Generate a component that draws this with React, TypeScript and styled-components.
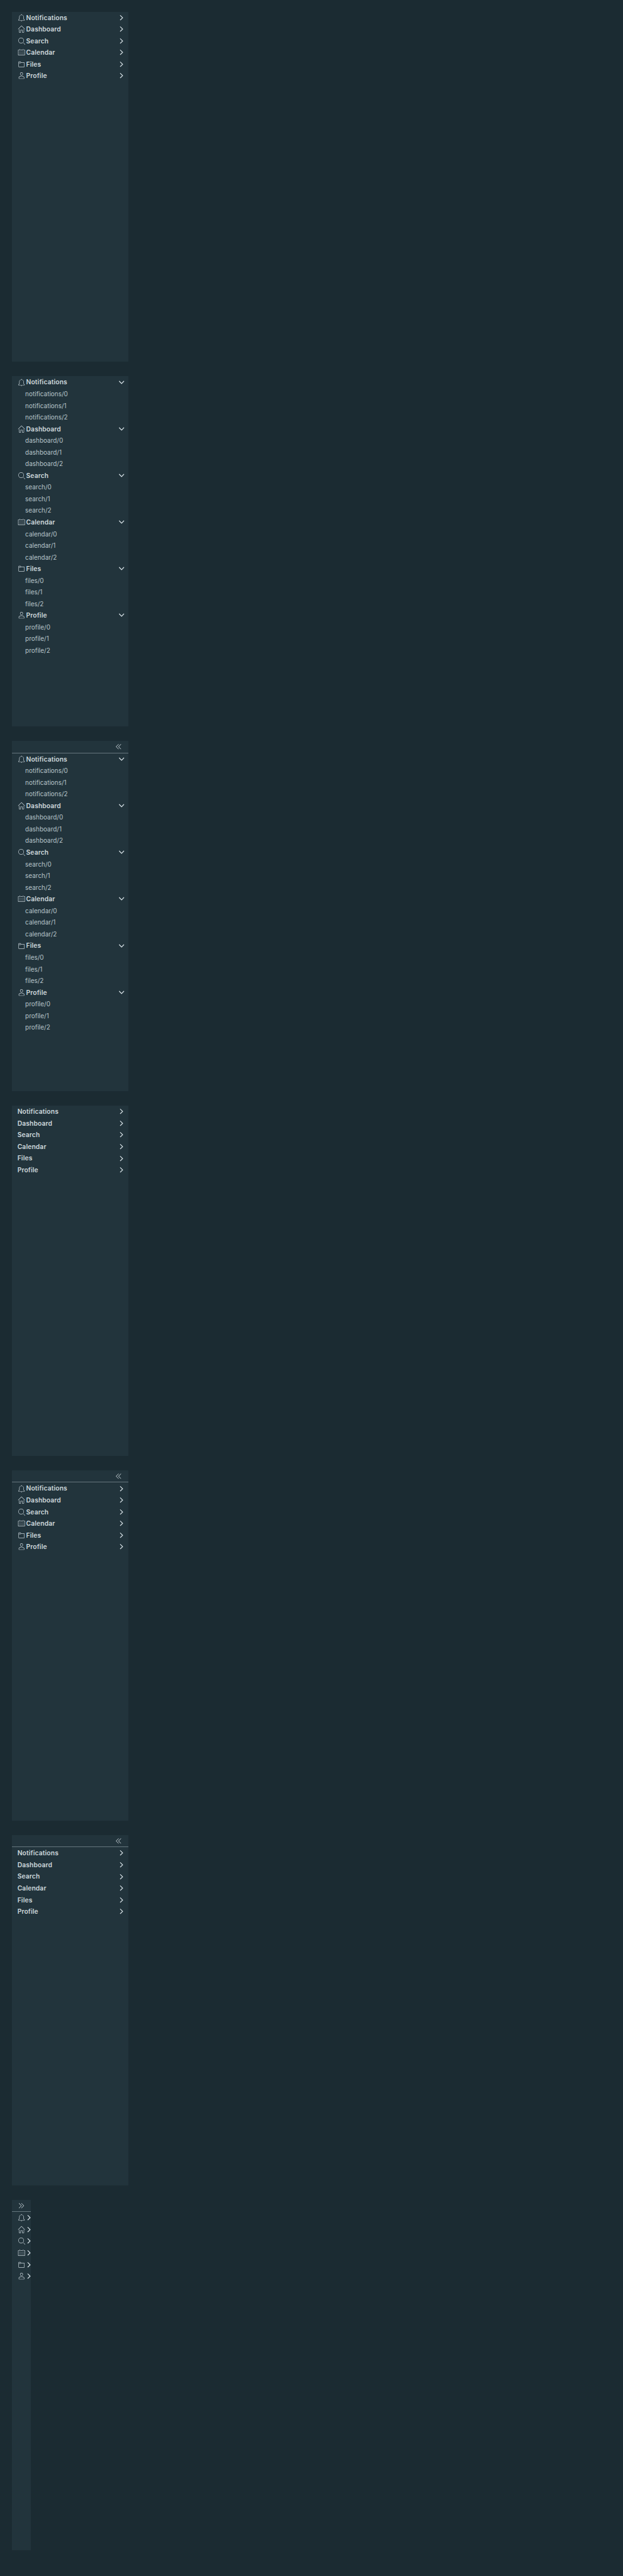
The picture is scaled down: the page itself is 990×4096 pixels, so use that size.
import React from "react";
import styled, { createGlobalStyle } from "styled-components";

const SCALE = 0.7732;
const u = (n: number) => `${+(n * SCALE).toFixed(3)}px`;

const GlobalStyle = createGlobalStyle`
  html, body { margin: 0; background: #1b2b32; }
  body { font-family: Inter, "Open Sans", sans-serif; }
`;

const Page = styled.main`
  box-sizing: border-box;
  height: 4096px;
  padding: ${u(24)};
  display: flex;
  flex-direction: column;
  gap: ${u(30)};
  overflow: hidden;
`;

const Panel = styled.nav<{ $collapsed?: boolean }>`
  flex: none;
  width: ${(p) => u(p.$collapsed ? 40 : 240)};
  height: ${u(720)};
  background: #22343c;
  overflow: hidden;
`;

const PanelHeader = styled.div<{ $collapsed?: boolean }>`
  box-sizing: border-box;
  display: flex;
  align-items: center;
  justify-content: ${(p) => (p.$collapsed ? "flex-start" : "flex-end")};
  height: ${u(25)};
  padding: 0 ${u(12)};
  border-bottom: 1px solid #65767d;
  color: #c9d4da;
`;

const GroupRow = styled.div<{ $collapsed?: boolean }>`
  display: flex;
  align-items: center;
  height: ${u(24)};
  padding: 0 ${(p) => (p.$collapsed ? 0 : u(6))} 0 ${u(12)};
  color: #c9d4da;
`;

const GroupLabel = styled.span<{ $indent: boolean }>`
  flex: 1;
  margin-left: ${(p) => (p.$indent ? u(1.8) : u(-0.2))};
  font-size: ${u(13.3)};
  font-weight: 600;
  letter-spacing: ${u(0.17)};
  line-height: ${u(24)};
  white-space: nowrap;
  color: #ced8dd;
`;

const Item = styled.div`
  height: ${u(24)};
  padding-left: ${u(27.9)};
  font-size: ${u(12.8)};
  letter-spacing: ${u(0.05)};
  line-height: ${u(24)};
  white-space: nowrap;
  color: #b8c5cb;
`;

const Icon = styled.svg<{ $turn?: number }>`
  flex: none;
  display: block;
  width: ${u(16)};
  height: ${u(16)};
  fill: currentColor;
  transform: rotate(${(p) => p.$turn ?? 0}deg);
`;

const Caret = styled(Icon)`
  color: #d8e2e7;
`;

const ICONS: Record<string, string> = {
  notifications:
    "M32.51,27.83A14.4,14.4,0,0,1,30,24.9a12.63,12.63,0,0,1-1.35-4.81V15.15A10.81,10.81,0,0,0,19.21,4.4V3.11a1.33,1.33,0,1,0-2.67,0V4.42A10.81,10.81,0,0,0,7.21,15.15v4.94A12.63,12.63,0,0,1,5.86,24.9a14.4,14.4,0,0,1-2.47,2.93,1,1,0,0,0-.34.75v1.36a1,1,0,0,0,1,1h27.8a1,1,0,0,0,1-1V28.58A1,1,0,0,0,32.51,27.83ZM5.13,28.94a16.17,16.17,0,0,0,2.44-3,14.24,14.24,0,0,0,1.65-5.85V15.15a8.74,8.74,0,1,1,17.47,0v4.94a14.24,14.24,0,0,0,1.65,5.85,16.17,16.17,0,0,0,2.44,3ZM18,34.28A2.67,2.67,0,0,0,20.58,32H15.32A2.67,2.67,0,0,0,18,34.28Z",
  dashboard:
    "M33.71,17.29l-15-15a1,1,0,0,0-1.41,0l-15,15a1,1,0,0,0,1.41,1.41L18,4.41,32.29,18.71a1,1,0,0,0,1.41-1.41ZM28,32h-5V22H13V32H8V18L6,20V32a2,2,0,0,0,2,2h7V24h6V34h7a2,2,0,0,0,2-2V19.76l-2-2Z",
  search:
    "M16.33,5.05A10.95,10.95,0,1,1,5.39,16,11,11,0,0,1,16.33,5.05m0-2.05a13,13,0,1,0,13,13,13,13,0,0,0-13-13ZM35,33.29l-7.37-7.42-1.42,1.41,7.37,7.42A1,1,0,1,0,35,33.29Z",
  calendar:
    "M32.25,6H29V8h3V30H4V8H7V6H3.75A1.78,1.78,0,0,0,2,7.81V30.19A1.78,1.78,0,0,0,3.75,32h28.5A1.78,1.78,0,0,0,34,30.19V7.81A1.78,1.78,0,0,0,32.25,6ZM8,14h2v2H8ZM14,14h2v2H14ZM20,14h2v2H20ZM26,14h2v2H26ZM8,19h2v2H8ZM14,19h2v2H14ZM20,19h2v2H20ZM26,19h2v2H26ZM8,24h2v2H8ZM14,24h2v2H14ZM20,24h2v2H20ZM26,24h2v2H26ZM10,10a1,1,0,0,0,1-1V3A1,1,0,0,0,9,3V9A1,1,0,0,0,10,10ZM26,10a1,1,0,0,0,1-1V3a1,1,0,0,0-2,0V9A1,1,0,0,0,26,10ZM13,6H23V8H13Z",
  files:
    "M30,9H16.42L14.11,5.82A2,2,0,0,0,12.49,5H6A2,2,0,0,0,4,7V29a2,2,0,0,0,2,2H30a2,2,0,0,0,2-2V11A2,2,0,0,0,30,9Zm0,20H6V13h7.31a2,2,0,0,0,2-2H6V7h6.49l2.61,3.59a1,1,0,0,0,.81.41H30Z",
  profile:
    "M18,17a7,7,0,1,0-7-7A7,7,0,0,0,18,17ZM18,5a5,5,0,1,1-5,5A5,5,0,0,1,18,5ZM30.47,24.37a17.16,17.16,0,0,0-24.93,0A2,2,0,0,0,5,25.74V31a2,2,0,0,0,2,2H29a2,2,0,0,0,2-2V25.74A2,2,0,0,0,30.47,24.37ZM29,31H7V25.73a15.17,15.17,0,0,1,22,0h0Z",
};

const ANGLE =
  "M29.52,22.52,18,10.6,6.48,22.52a1.7,1.7,0,0,0,2.45,2.36L18,15.49l9.08,9.39a1.7,1.7,0,0,0,2.45-2.36Z";
const ANGLE_DOUBLE =
  "M29,19.41a1,1,0,0,1-.71-.29L18,8.83,7.71,19.12a1,1,0,0,1-1.41-1.41L18,6,29.71,17.71A1,1,0,0,1,29,19.41ZM29,30.41a1,1,0,0,1-.71-.29L18,19.83,7.71,30.12a1,1,0,0,1-1.41-1.41L18,17,29.71,28.71A1,1,0,0,1,29,30.41Z";

const GROUPS = ["Notifications", "Dashboard", "Search", "Calendar", "Files", "Profile"];

interface NavProps {
  expanded?: boolean;
  header?: boolean;
  icons?: boolean;
  collapsed?: boolean;
}

function VerticalNav({ expanded, header, icons = true, collapsed }: NavProps) {
  return (
    <Panel $collapsed={collapsed}>
      {header && (
        <PanelHeader $collapsed={collapsed}>
          <Icon viewBox="0 0 36 36" $turn={collapsed ? 90 : -90}>
            <path d={ANGLE_DOUBLE} />
          </Icon>
        </PanelHeader>
      )}
      {GROUPS.map((name) => {
        const key = name.toLowerCase();
        return (
          <React.Fragment key={key}>
            <GroupRow $collapsed={collapsed}>
              {icons && (
                <Icon viewBox="0 0 36 36">
                  <path d={ICONS[key]} />
                </Icon>
              )}
              {!collapsed && <GroupLabel $indent={icons}>{name}</GroupLabel>}
              <Caret viewBox="0 0 36 36" $turn={expanded ? 180 : 90}>
                <path d={ANGLE} />
              </Caret>
            </GroupRow>
            {expanded && [0, 1, 2].map((n) => <Item key={n}>{`${key}/${n}`}</Item>)}
          </React.Fragment>
        );
      })}
    </Panel>
  );
}

export default function App() {
  return (
    <>
      <GlobalStyle />
      <Page>
        <VerticalNav />
        <VerticalNav expanded />
        <VerticalNav expanded header />
        <VerticalNav icons={false} />
        <VerticalNav header />
        <VerticalNav header icons={false} />
        <VerticalNav header collapsed />
      </Page>
    </>
  );
}
